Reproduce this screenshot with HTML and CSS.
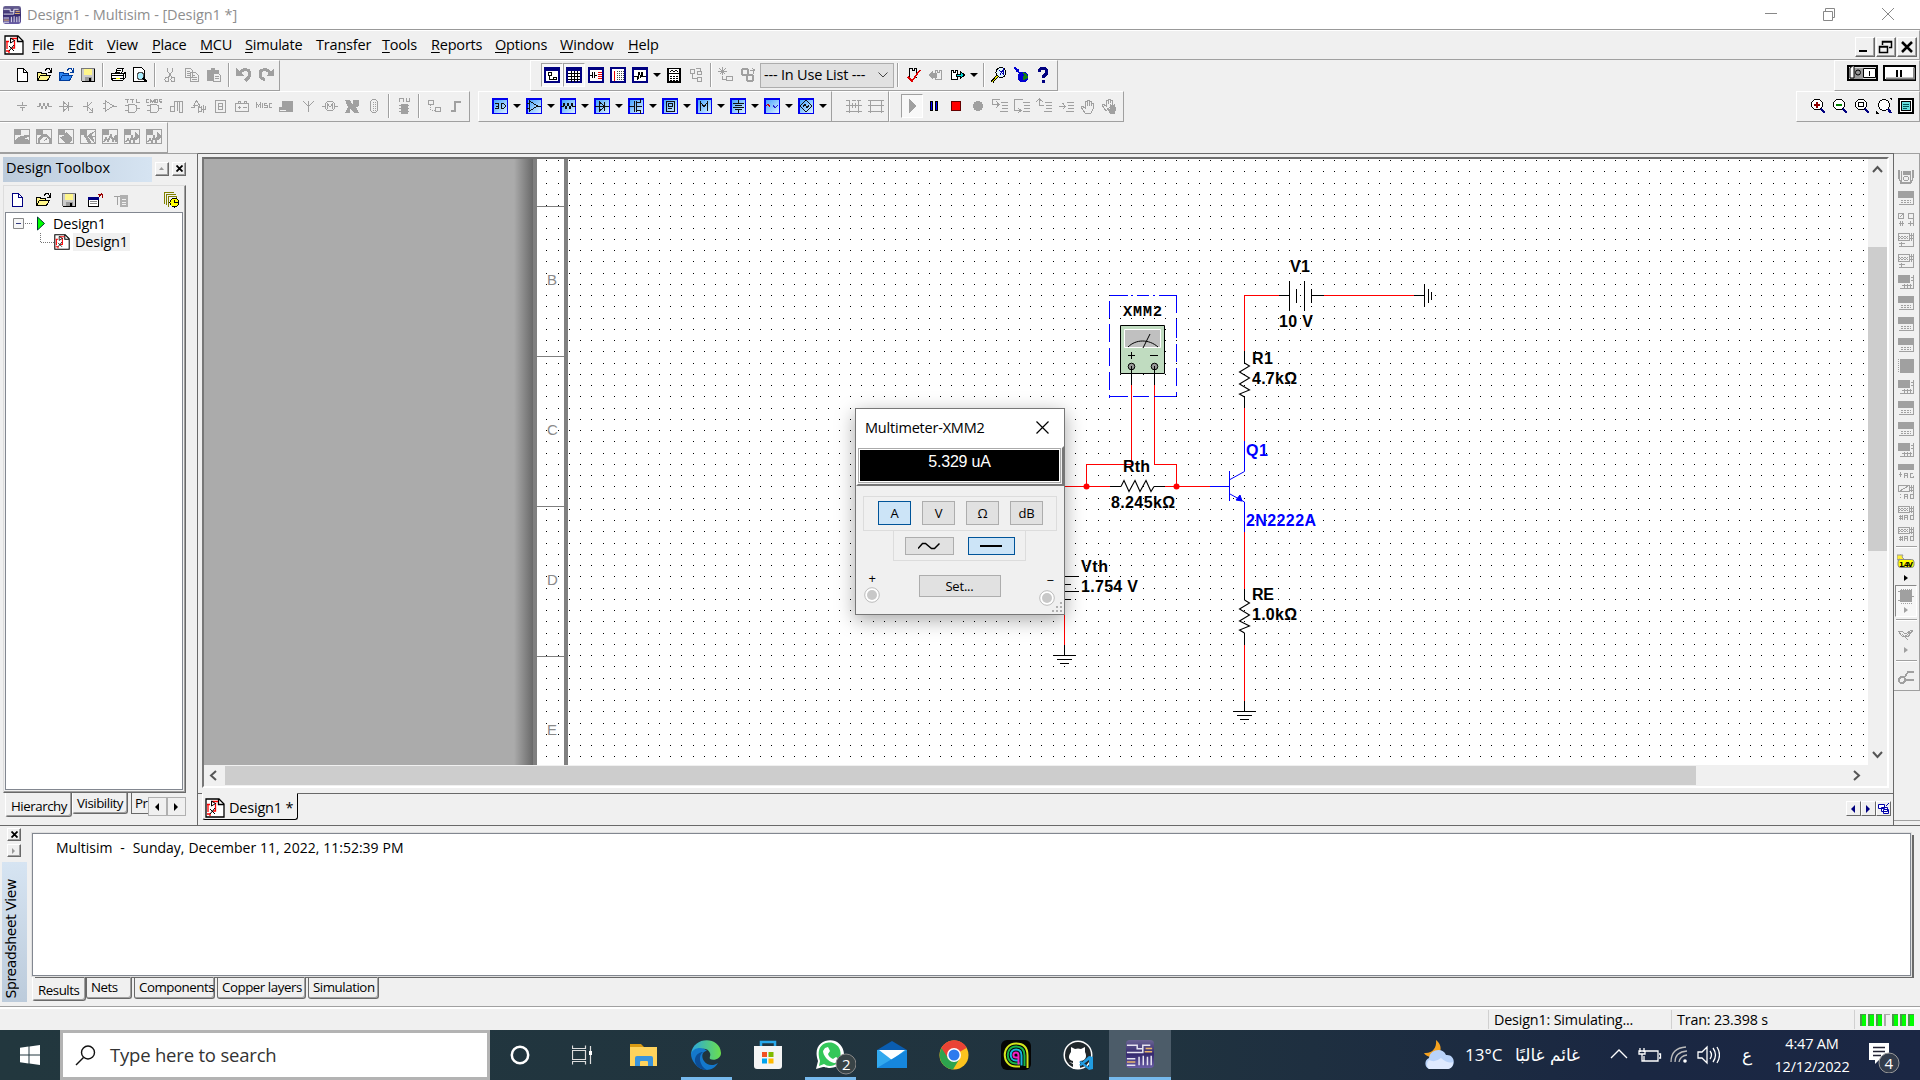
FILE: index.html
```html
<!DOCTYPE html>
<html lang="en">
<head>
<meta charset="utf-8">
<title>Design1 - Multisim</title>
<link rel="stylesheet" href="styles.css">
</head>
<body>
<svg class="sprite" aria-hidden="true">
  <symbol id="doc" viewBox="0 0 16 16"><path d="M3.500 1.500h6l4 4v9h-10z" fill="#fff" stroke="currentColor"/><path d="M9.500 1.500v4h4" fill="none" stroke="currentColor"/></symbol>
  <symbol id="open" viewBox="0 0 16 16"><path d="M1.500 14v-9h3l1 1h5v2" fill="var(--f,#fff68a)" stroke="currentColor"/><path d="M1.500 13.500l3-5h10l-3 5z" fill="var(--f,#fff68a)" stroke="currentColor"/><path d="M9 3.500l2-2h2l2 3M15.500 1v4h-4" fill="none" stroke="currentColor"/></symbol>
  <symbol id="save" viewBox="0 0 16 16"><path d="M1.500 1.500h13v13h-12l-1-1z" fill="#ccc" stroke="#777"/><path d="M2 14.500h12.500V2" fill="none" stroke="#000"/><path d="M4 2h8v6H4z" fill="#fff68a"/><path d="M5 10h7v4H5z" fill="#999"/><path d="M9 11h2v3H9z" fill="#000"/></symbol>
  <symbol id="print" viewBox="0 0 16 16"><path d="M5.500 6l2-5h6l-2 5M1.500 6.500h12l2-1v5l-3 3h-10l-1-2z" fill="#fff" stroke="currentColor"/><path d="M7 3.500h4M6 5.500h4M1 8.500h12M2 11.500h11M13.500 7v6" stroke="currentColor" fill="none"/><path d="M6 11h4v1H6z" fill="#ff0"/></symbol>
  <symbol id="preview" viewBox="0 0 16 16"><path d="M1.500.5h8l3 3v11h-11z" fill="#fff" stroke="currentColor"/><circle cx="8.500" cy="9" r="3.500" fill="#aef" stroke="#555"/><path d="M11 11l4 4" stroke="currentColor" stroke-width="2"/></symbol>
  <symbol id="cut" viewBox="0 0 16 16"><path d="M5.500 1v3l5 7M10.500 1v3L6 11" stroke="currentColor" fill="none"/><circle cx="5" cy="12.500" r="2" fill="none" stroke="currentColor"/><circle cx="11" cy="12.500" r="2" fill="none" stroke="currentColor"/></symbol>
  <symbol id="copy" viewBox="0 0 16 16"><path d="M1.500 1.500h5l2 2v7h-7zM6.500 5.500h5l3 3v6h-8z" fill="#f0f0f0" stroke="currentColor"/><path d="M3 4.500h3M3 6.500h3M3 8.500h3M8 8.500h3M8 10.500h5M8 12.500h5" stroke="currentColor"/></symbol>
  <symbol id="paste" viewBox="0 0 16 16"><path d="M1 3h4V1h4v2h4v11H1z" fill="currentColor"/><path d="M7.500 6.500h5l2 2v6h-7z" fill="#f0f0f0" stroke="currentColor"/><path d="M9 9.500h4M9 11.500h4" stroke="currentColor"/></symbol>
  <symbol id="undo" viewBox="0 0 16 16"><path d="M4 6c3-5 10-4 10 1 0 3-2 4-5 7" fill="none" stroke="currentColor" stroke-width="3"/><path d="M0 1v8h8z" fill="currentColor"/></symbol>
  <symbol id="redo" viewBox="0 0 16 16"><path d="M12 6C9 1 2 2 2 7c0 3 1 4 5 6" fill="none" stroke="currentColor" stroke-width="3"/><path d="M16 1v8H8z" fill="currentColor"/></symbol>
  <symbol id="src" viewBox="0 0 16 16"><path d="M8.500 4v3M3 7.500h10M6 9.500h5M8.500 10v3" stroke="currentColor" fill="none"/></symbol>
  <symbol id="res" viewBox="0 0 16 16"><path d="M1 8.500h2l1-3 2 5 2-5 2 5 2-5 1 3h3" stroke="currentColor" fill="none"/></symbol>
  <symbol id="diode" viewBox="0 0 16 16"><path d="M1 8.500h14M5.500 4v9l5-4.500zM10.500 4v9" stroke="currentColor" fill="none"/></symbol>
  <symbol id="bjt" viewBox="0 0 16 16"><path d="M3 8.500h4M7.500 4v9M8 8l4-4M8 9l5 5M12.500 10v4h-4" stroke="currentColor" fill="none"/></symbol>
  <symbol id="opamp" viewBox="0 0 16 16"><path d="M3.500 3v10l8-5zM1 5.500h2M1 10.500h2M11 8.500h4" stroke="currentColor" fill="none"/></symbol>
  <symbol id="gate" viewBox="0 0 16 16"><path d="M1 1.500h4M3.500 1v4M6 1.500h4M8.500 1v4M12.500 1v3.500h3M1 7.500h4M1 12.500h4M4.500 6.500v8h5c4 0 5-8 0-8zM12 10.500h4" stroke="currentColor" fill="none"/></symbol>
  <symbol id="gate2" viewBox="0 0 16 16"><path d="M3 1.500H.5v3H3M4.500 5V1.500L6.500 4l2-2.500V5M9.500 1.500h2v3h-2zM15.500 1.500h-2v1.500h2v1.500h-2M1 7.500h4M1 12.500h4M4.500 6.500v8h5c4 0 5-8 0-8zM12 10.500h4" stroke="currentColor" fill="none"/></symbol>
  <symbol id="mixed" viewBox="0 0 16 16"><path d="M2.500 8.500h4v5h-4zM6.500 14V3.500h3V13M9 3.500h5.500v11M11.500 3v11h3" stroke="currentColor" fill="none"/></symbol>
  <symbol id="mix2" viewBox="0 0 16 16"><path d="M1 9.500h3V6l2.500-3 3 4v3M3 7.500h5M8.500 9.500h3v4h-3M8.500 8v7M13.500 7v8M11.500 8v3h4V8" stroke="currentColor" fill="none"/></symbol>
  <symbol id="seg" viewBox="0 0 16 16"><path d="M3.500 2.500h10v12h-10zM6.500 5.500h4v6h-4zM6 8.500h5" stroke="currentColor" fill="none"/></symbol>
  <symbol id="batt" viewBox="0 0 16 16"><path d="M1.500 5.500h13v8h-13zM4 5V3h2v2M10 5V3h2v2M4 9.500h3M9 9.500h4M5.500 8v3" stroke="currentColor" fill="none"/></symbol>
  <symbol id="misc" viewBox="0 0 16 16"><path d="M.5 10V5l2 3 2-3v5M6.500 5v5M11 5.500H8.500v2H11v2H8M16 5.500h-3v4h3" stroke="currentColor" fill="none"/></symbol>
  <symbol id="peri" viewBox="0 0 16 16"><path d="M4 3h11v8H4zM1 9h14v5H1z" fill="currentColor"/><path d="M2 12h6v1H2z" fill="#f0f0f0"/></symbol>
  <symbol id="ant" viewBox="0 0 16 16"><path d="M3 3l5.500 5.500L14 3M8.500 3v11" stroke="currentColor" fill="none"/></symbol>
  <symbol id="motor" viewBox="0 0 16 16"><circle cx="8" cy="8" r="5" fill="none" stroke="currentColor"/><path d="M0 8.500h3M13 8.500h3M5.500 11V6L8 9l2.500-3v5" stroke="currentColor" fill="none"/></symbol>
  <symbol id="ni" viewBox="0 0 16 16"><path d="M1 2h5l3 5V2h6v6l-3 1 3 6h-5l-4-5v5H1l3-6z" fill="currentColor"/></symbol>
  <symbol id="conn" viewBox="0 0 16 16"><rect x="4.500" y="1.500" width="7" height="13" rx="3.500" fill="none" stroke="currentColor"/><path d="M7 4v9M9.500 4v9" stroke="currentColor" stroke-dasharray="1 1"/></symbol>
  <symbol id="mcu" viewBox="0 0 16 16"><path d="M3.500 4V.5h4V4M10.500 0v3h3V0M5 6h6v9H5z" stroke="currentColor" fill="none"/><path d="M5 6h6v9H5z" fill="currentColor"/><path d="M3 7.500h10M3 10.500h10M3 13.500h10" stroke="currentColor"/></symbol>
  <symbol id="hier" viewBox="0 0 16 16"><path d="M2.500 2.500h5v4h-5zM9.500 9.500h5v4h-5z" stroke="currentColor" fill="none"/><path d="M4.500 7v5h5" stroke="currentColor" stroke-dasharray="1 1" fill="none"/></symbol>
  <symbol id="bus" viewBox="0 0 16 16"><path d="M3 13h4V4h6" stroke="currentColor" stroke-width="2" fill="none"/></symbol>
  <symbol id="gb" viewBox="0 0 16 16"><path d="M.5.5h15v14H.5z" fill="#f0f0f0" stroke="currentColor"/><path d="M0 0h7v6H0z" fill="currentColor"/></symbol>
  <symbol id="g1" viewBox="0 0 16 16"><use href="#gb"/><path d="M1 11c4-4 8-5 14-5v2l-5 1 5 2v3H1v-2l7-1-7 1z" fill="currentColor"/></symbol>
  <symbol id="g2" viewBox="0 0 16 16"><use href="#gb"/><path d="M2 14V9l4-4h5l4 5v4h-2v-3l-3-3H7l-3 3v3zM7 12l4-4v3z" fill="currentColor"/></symbol>
  <symbol id="g3" viewBox="0 0 16 16"><use href="#gb"/><path d="M8 3l6 5v3l-3 3H7l-3-4-3-2 5-1z" fill="currentColor"/></symbol>
  <symbol id="g4" viewBox="0 0 16 16"><use href="#gb"/><path d="M6 5l5 9H9L4 6zM11 4l-3 3 7 7M15 2l-5 4M15 8l-5-1" fill="currentColor" stroke="currentColor"/></symbol>
  <symbol id="g5" viewBox="0 0 16 16"><use href="#gb"/><path d="M2 13l2-4 2 3 3-6 2 6 3-6v7" fill="none" stroke="currentColor" stroke-width="1.500"/></symbol>
  <symbol id="g6" viewBox="0 0 16 16"><use href="#gb"/><path d="M2 13l2-3 2 3 2-6 2 6 2-7M12 5v5l3-2z" fill="none" stroke="currentColor" stroke-width="1.500"/></symbol>
  <symbol id="w1" viewBox="0 0 16 16"><path d="M1 1h14v14H1z" fill="#fff" stroke="#000080" stroke-width="2"/><path d="M1 2h14" stroke="#000080" stroke-width="3"/><path d="M4.500 5.500h3v3h-3zM9.500 10.500h3v2h-3zM5.500 9v3h4" stroke="#000" fill="none"/></symbol>
  <symbol id="w2" viewBox="0 0 16 16"><path d="M1 1h14v14H1z" fill="#fff" stroke="#000080" stroke-width="2"/><path d="M1 2h14" stroke="#000080" stroke-width="3"/><path d="M5.500 4v11M8.500 4v11M11.500 4v11M2 6.500h12M2 9.500h12M2 12.500h12" stroke="#000"/></symbol>
  <symbol id="w3" viewBox="0 0 16 16"><path d="M1 1h14v14H1z" fill="#fff" stroke="#000080" stroke-width="2"/><path d="M1 2h14" stroke="#000080" stroke-width="2"/><path d="M2 8.500h2M4.500 5v6M6.500 5v6M7 8.500h2" stroke="#000"/><path d="M10 5.500h4M10 7.500h4M10 9.500h4M10 11.500h4" stroke="#e00"/></symbol>
  <symbol id="w4" viewBox="0 0 16 16"><path d="M1 1h14v14H1z" fill="#fff" stroke="#000080" stroke-width="2"/><path d="M4.500 4v10" stroke="#e00"/><path d="M7.500 4v10M9.500 4v10M11.500 4v10M13.500 4v10" stroke="#444" stroke-dasharray="1 1"/></symbol>
  <symbol id="w5" viewBox="0 0 16 16"><path d="M1 1h14v14H1z" fill="#fff" stroke="#000080" stroke-width="2"/><path d="M1 2h14" stroke="#000080" stroke-width="2"/><path d="M2 9.500h3l1 3 1-7 2 5 1-5 1 4h3" stroke="#000" fill="none"/></symbol>
  <symbol id="calc" viewBox="0 0 16 16"><path d="M2 1.500h12v13.500H2z" fill="#fff" stroke="#000" stroke-width="1.500"/><path d="M4 5l2-2 2 2 2-2 2 2M3 6.500h10" stroke="#000" fill="none"/><path d="M4 9h9M4 11h9M4 13h9" stroke="#000" stroke-dasharray="2 1"/></symbol>
  <symbol id="blocks" viewBox="0 0 16 16"><path d="M2.500 2.500h4v4h-4zM9.500 4.500h4v3h-4zM9.500 10.500h4v4h-4zM4.500 7v4h4M8 1.500h4v3" stroke="currentColor" fill="none"/></symbol>
  <symbol id="star" viewBox="0 0 16 16"><path d="M4.500 0v8M0 4.500h9M1.500 1.500l6 6M7.500 1.500l-6 6M8.500 9.500h6v4h-6zM4.500 9v3h4" stroke="currentColor" fill="none"/></symbol>
  <symbol id="gears" viewBox="0 0 16 16"><circle cx="5" cy="5" r="3.500" fill="none" stroke="currentColor" stroke-width="2"/><circle cx="10" cy="11" r="3.500" fill="none" stroke="currentColor" stroke-width="2"/><path d="M10 3.500h3V7M12 1l3 2.500" stroke="currentColor" fill="none"/></symbol>
  <symbol id="check" viewBox="0 0 16 16"><path d="M2.500 10.500h2v-9h3v2h2v-2h2v6M9 10.500h3" stroke="#000" fill="none"/><path d="M3 10l4 4 8-11" stroke="#e00000" fill="none" stroke-width="1.600"/></symbol>
  <symbol id="back" viewBox="0 0 16 16"><path d="M1 8l5-4v8zM6 6h4v5H6z" fill="currentColor"/><path d="M8.500 12V3h2v2h2V3h2v9z" stroke="currentColor" fill="none"/></symbol>
  <symbol id="fwd" viewBox="0 0 16 16"><path d="M2.500 12V3h2v2h2V3h2v9z" stroke="#000" fill="#fff"/><path d="M7 7h4V4l4.500 4-4.500 4V9H7z" fill="#0dd" stroke="#000"/></symbol>
  <symbol id="find" viewBox="0 0 16 16"><circle cx="10" cy="5.500" r="5" fill="#dff4ff" stroke="#000"/><path d="M8 3l4 4v-4l-3 5" fill="none" stroke="#00a"/><path d="M6.500 9L1 15" stroke="#000" stroke-width="3"/><path d="M6.500 9L1 15" stroke="#ee0"/></symbol>
  <symbol id="globe" viewBox="0 0 16 16"><circle cx="10" cy="10" r="5.500" fill="#0000d0"/><path d="M10 5l4 2 1 4-3 1-1 3-1-4 1-3z" fill="#108010"/><path d="M0 1l2-1 3 3V1l2 5-5-1 1-1z" fill="#0000d0"/></symbol>
  <symbol id="help" viewBox="0 0 16 16"><path d="M4 5c0-5 8-5 8 0 0 3-4 3-4 6M8 12.500v3" stroke="#000080" fill="none" stroke-width="3"/></symbol>
  <symbol id="vbase" viewBox="0 0 16 16"><path d="M.5.5h15v15H.5z" fill="url(#bl)" stroke="#00e" stroke-width="2"/></symbol>
  <symbol id="scope" viewBox="0 0 16 16"><path d="M4 3.500h8v10H4zM6 5.500h4v3H6zM6 10.500h4" fill="none" stroke="currentColor"/></symbol>
  <symbol id="mlet" viewBox="0 0 16 16"><path d="M4.500 13V4l3.500 5 3.500-5v9" stroke="currentColor" fill="none"/></symbol>
  <symbol id="d3" viewBox="0 0 16 16"><path d="M3 5.500h3.500v5H3M4 8h3M9.500 5.500v5h2l2-2v-1l-2-2z" stroke="currentColor" fill="none"/></symbol>
  <symbol id="fet" viewBox="0 0 16 16"><path d="M1 8.500h5M6.500 3v11M8.500 3v11M9 4.500h3V1M9 8.500h5M9 12.500h3V16" stroke="currentColor" fill="none"/></symbol>
  <symbol id="cap" viewBox="0 0 16 16"><path d="M8.500 2v3M3 5.500h11M5 7.500h7M3 9.500h11M5 11.500h7M8.500 12v3" stroke="currentColor" fill="none"/></symbol>
  <symbol id="probeS" viewBox="0 0 16 16"><path d="M2 8l2-2 2 3" stroke="#c00" fill="none"/><path d="M9 7l2 3 3-3" stroke="#22c" fill="none"/></symbol>
  <symbol id="ac" viewBox="0 0 16 16"><path d="M8 2l6 6-6 6-6-6zM5 9l2-3 2 4 2-3" stroke="currentColor" fill="none"/></symbol>
  <symbol id="lad1" viewBox="0 0 16 16"><path d="M3.500 3v12M12.500 3v12M0 2.500h4M6 2.500h4M11 2.500h4M0 7.500h16M0 13.500h16M6.500 5v5M9.500 5v5" stroke="currentColor" fill="none"/></symbol>
  <symbol id="lad2" viewBox="0 0 16 16"><path d="M2.500 2v13M13.500 2v13M0 2.500h16M0 7.500h16M0 13.500h16" stroke="currentColor" fill="none"/></symbol>
  <symbol id="play" viewBox="0 0 16 16"><path d="M5 1l7 7-7 7z" fill="currentColor"/></symbol>
  <symbol id="pause" viewBox="0 0 16 16"><path d="M4.500 3.500h2v9h-2zM9.500 3.500h2v9h-2z" fill="#00f" stroke="#000"/></symbol>
  <symbol id="stop" viewBox="0 0 16 16"><path d="M3.500 3.500h9v9h-9z" fill="#f00" stroke="#600"/></symbol>
  <symbol id="rec" viewBox="0 0 16 16"><circle cx="8" cy="8" r="5" fill="currentColor"/></symbol>
  <symbol id="st1" viewBox="0 0 16 16"><path d="M8 1.500H.5v5H7M4 3l3 3.500L4 10M9 4.500h7M10 7.500h6M10 10.500h6M8 13.500h8" stroke="currentColor" fill="none"/></symbol>
  <symbol id="st2" viewBox="0 0 16 16"><path d="M9 1.500H.5v11H6M4 10l3 2.500L4 15M9 4.500h7M10 7.500h6M10 10.500h6M9 13.500h7" stroke="currentColor" fill="none"/></symbol>
  <symbol id="st3" viewBox="0 0 16 16"><path d="M3.500 1v6.500H8M0 4l3.500-3L7 4M9 4.500h7M10 7.500h6M10 10.500h6M8 13.500h8" stroke="currentColor" fill="none"/></symbol>
  <symbol id="st4" viewBox="0 0 16 16"><path d="M1 8.500h6M4.500 5l3 3.500-3 3M9 4.500h7M10 7.500h6M10 10.500h6M8 13.500h8" stroke="currentColor" fill="none"/></symbol>
  <symbol id="hand" viewBox="0 0 16 16"><path d="M5 15L1 9l1-1 3 2V3h2v5V2h2v6V3h2v5V5h2v6l-2 4z" stroke="currentColor" fill="none"/></symbol>
  <symbol id="hand2" viewBox="0 0 16 16"><path d="M4 13L0 7l1-1 3 2V2h2v4V1h2v4V2h2v5z" stroke="currentColor" fill="none"/><path d="M8 16L5 10l3 1V6h1l1 3V5h1l1 4V6h1l1 5-1 5z" fill="currentColor"/></symbol>
  <symbol id="zin" viewBox="0 0 16 16"><circle cx="7" cy="6.500" r="5.500" fill="#fff" stroke="#000"/><path d="M11 11l4 4" stroke="#000080" stroke-width="2.500"/><path d="M4 6.500h6M7 3.500v6" stroke="#900000" stroke-width="2"/></symbol>
  <symbol id="zout" viewBox="0 0 16 16"><circle cx="7" cy="6.500" r="5.500" fill="#fff" stroke="#000"/><path d="M11 11l4 4" stroke="#000080" stroke-width="2.500"/><path d="M4 6.500h6" stroke="#008000" stroke-width="2"/></symbol>
  <symbol id="zarea" viewBox="0 0 16 16"><circle cx="7" cy="6.500" r="5.500" fill="#fff" stroke="#000"/><path d="M11 11l4 4" stroke="#000080" stroke-width="2.500"/><path d="M4.500 4.500h5v4h-5z" stroke="#000" fill="none"/></symbol>
  <symbol id="zfit" viewBox="0 0 16 16"><circle cx="8" cy="7" r="5.500" fill="#fff" stroke="#000"/><path d="M12 11l3 4" stroke="#000080" stroke-width="2.500"/><path d="M13 0h3v3zM0 13v3h3z"/></symbol>
  <symbol id="full" viewBox="0 0 16 16"><path d="M1 1h14v14H1z" fill="#fff" stroke="#000" stroke-width="1.500"/><path d="M3.500 3.500h9v9h-9z" fill="#6dd" stroke="#000"/><path d="M5 6.500h6M5 8.500h6M5 10.500h4" stroke="#055"/></symbol>
  <symbol id="sheet" viewBox="0 0 20 20"><path d="M1 1h13l5 5v13H1z" fill="#fff" stroke="#000" stroke-width="1.300"/><path d="M13.500 1v5.500H19" fill="none" stroke="#000" stroke-width="1.300"/><path d="M2 6.500h3M3 7v7M7 3.500h6M10.500 5v8H8M2 16h3v2" fill="none" stroke="#f00" stroke-width="1.300"/><path d="M6.500 3v5l4-2.500zM5 16l5-6M5 11l5 5" fill="none" stroke="#000"/></symbol>
  <symbol id="chip" viewBox="0 0 30 30"><rect width="30" height="30" rx="4" fill="url(#pu)"/><path d="M1 5.500h11v4h6v-4h8M1 13.500h17v-6M1 20h9M1 27h9M14 27v-9M18.500 27V17M23 27v-9M27 27V17" stroke="#e6e4f0" stroke-width="1.600" fill="none"/><path d="M20 12.500h8M21 9h7M1 23.500h9" stroke="#e9b56b" stroke-width="1.600"/></symbol>
  <symbol id="ins" viewBox="0 0 16 16"><path d="M0 1h16v7H0z" fill="currentColor"/><path d="M15.500 8v6.500H1" stroke="currentColor" fill="none"/><path d="M3 10.500h10M3 12.500h10" stroke="currentColor" stroke-dasharray="2 1"/></symbol>
  <symbol id="ins2" viewBox="0 0 16 16"><path d="M.5 2.500h5v5h-5zM10.500 2.500h5v5h-5zM1 12.500h5M10 12.500h6M2.500 10v5M4.500 10v5M12.500 10v5M15 8v7M2 6l3-3" stroke="currentColor" fill="none"/></symbol>
  <symbol id="ins3" viewBox="0 0 16 16"><path d="M.5 1.500h11v7H.5zM13.500 1v8M15.500 1v14M12 3.500h4M12 6.500h4M1 11.500h6M1 14.500h15M3.500 10v5" stroke="currentColor" fill="none"/><path d="M1 4l3 3 3-3 3 3M1 7l3-3 3 3 3-3" stroke="currentColor" fill="none"/></symbol>
  <symbol id="ins4" viewBox="0 0 16 16"><path d="M0 1h12v8H0z" fill="currentColor"/><path d="M15.500 1v13.500H2M13 3.500h3M13 6.500h3M4 11.500h10M6.500 10v4M9.500 10v4M12.500 10v4" stroke="currentColor" fill="none"/></symbol>
  <symbol id="insAG" viewBox="0 0 16 16"><path d="M0 1h16v6H0z" fill="currentColor"/><path d="M1 11.500h3M2.500 9v5M6.500 15v-5h3v5M6 12.500h4M15 10.500h-3v4h3v-2" stroke="currentColor" fill="none"/></symbol>
  <symbol id="insAG2" viewBox="0 0 16 16"><path d="M.5 1.500h11v6H.5zM2 7l8-5M13.500 1v7M15.500 1v14M12 3.500h4M12 6.500h4M2.500 10v1M2.500 13v1M6.500 15v-5h3v5M6 12.500h4M15 10.500h-3v4h3v-2" stroke="currentColor" fill="none"/></symbol>
  <symbol id="insTK" viewBox="0 0 16 16"><path d="M.5 1.500h11v6H.5zM13.500 1v7M15.500 1v14M12 3.500h4M12 6.500h4M1 11.500h4M1 13.500h4M2.500 10v5M4 10v5M6.500 15v-5h3v5M6 12.500h4M15 10.500h-3v4h3v-2M1 3l3 3 3-3 3 3M1 6l3-3 3 3 3-3" stroke="currentColor" fill="none"/></symbol>
  <symbol id="insM" viewBox="0 0 16 16"><path d="M1 1v8l2 5h10l2-5V1M3.500 2v11M12.500 2v11" fill="none" stroke="currentColor" stroke-width="1.300"/><path d="M5 2h7v4H5z" fill="currentColor"/><circle cx="8" cy="9.500" r="2.500" fill="none" stroke="currentColor"/></symbol>
  <linearGradient id="bl" x1="0" y1="0" x2="1" y2="1"><stop offset="0" stop-color="#39f"/><stop offset="1" stop-color="#e2f4ff"/></linearGradient>
  <linearGradient id="pu" x1="0" y1="0" x2="0" y2="1"><stop offset="0" stop-color="#6b6494"/><stop offset=".5" stop-color="#34286e"/><stop offset="1" stop-color="#6a5ea6"/></linearGradient>
</svg>

<div class="app">
  <header class="titlebar">
    <svg class="logo"><use href="#chip"/></svg><span class="title">Design1 - Multisim - [Design1 *]</span>
    <svg class="wincontrols" width="130" height="16" viewBox="0 0 130 16"><path d="M0 6.500h12M58.500 4.500h9v9h-9zM60.500 4V1.500h9v9h-2M117 1l12 12M129 1l-12 12" fill="none" stroke="#888"/></svg>
  </header>
  <nav class="menubar">
    <svg class="sheeticon"><use href="#sheet"/></svg>
    <div class="menus"><span><u>F</u>ile</span><span><u>E</u>dit</span><span><u>V</u>iew</span><span><u>P</u>lace</span><span><u>M</u>CU</span><span><u>S</u>imulate</span><span>Tra<u>n</u>sfer</span><span><u>T</u>ools</span><span><u>R</u>eports</span><span><u>O</u>ptions</span><span><u>W</u>indow</span><span><u>H</u>elp</span></div>
    <div class="mdibtns"><b><svg viewBox="0 0 16 16"><path d="M2 12h8" stroke="#000" stroke-width="2"/></svg></b><b><svg viewBox="0 0 16 16"><path d="M4.500 6V2.500h9v6H11M4 3h10M1.500 7.500h8v6h-8zM1 8h9" fill="none" stroke="#000" stroke-width="1.500"/></svg></b><b><svg viewBox="0 0 16 16"><path d="M3 3l10 10M13 3L3 13" stroke="#000" stroke-width="2.500"/></svg></b></div>
  </nav>

  <div class="row">
    <div class="bar b1">
      <i class="t k"><svg><use href="#doc"/></svg></i><i class="t k"><svg><use href="#open"/></svg></i><i class="t k blue"><svg><use href="#open"/></svg></i><i class="t k"><svg><use href="#save"/></svg></i><s></s>
      <i class="t k"><svg><use href="#print"/></svg></i><i class="t k"><svg><use href="#preview"/></svg></i><s></s>
      <i class="t"><svg><use href="#cut"/></svg></i><i class="t"><svg><use href="#copy"/></svg></i><i class="t"><svg><use href="#paste"/></svg></i><s></s>
      <i class="t"><svg><use href="#undo"/></svg></i><i class="t"><svg><use href="#redo"/></svg></i>
    </div>
    <div class="bar b2">
      <i class="t on"><svg><use href="#w1"/></svg></i><i class="t on"><svg><use href="#w2"/></svg></i><i class="t"><svg><use href="#w3"/></svg></i><i class="t"><svg><use href="#w4"/></svg></i><i class="t"><svg><use href="#w5"/></svg></i><em></em>
      <i class="t"><svg><use href="#calc"/></svg></i><i class="t"><svg><use href="#blocks"/></svg></i><s></s>
      <i class="t"><svg><use href="#star"/></svg></i><i class="t"><svg><use href="#gears"/></svg></i>
      <div class="combo"><span>--- In Use List ---</span><svg width="10" height="6" viewBox="0 0 10 6"><path d="M.5.5L5 5 9.500.5" fill="none" stroke="#444"/></svg></div><s></s>
      <i class="t"><svg><use href="#check"/></svg></i><i class="t"><svg><use href="#back"/></svg></i><i class="t"><svg><use href="#fwd"/></svg></i><em></em><s></s>
      <i class="t"><svg><use href="#find"/></svg></i><i class="t"><svg><use href="#globe"/></svg></i><i class="t"><svg><use href="#help"/></svg></i>
    </div>
    <div class="bar b3">
      <svg width="69" height="17" viewBox="0 0 69 17"><path d="M1 1h29v14H1z" fill="#ddd" stroke="#000" stroke-width="2"/><path d="M3 3h13v11H3z" fill="#999"/><path d="M3 3l4-3v13H3z" fill="#fff" stroke="#000"/><circle cx="11" cy="7.500" r="2.500" fill="none" stroke="#000"/><path d="M16.500 3.500h12v9h-12z" fill="#fff" stroke="#000"/><path d="M22.500 6v5" stroke="#000"/><path d="M37 1h31v14H37z" fill="#fff" stroke="#000" stroke-width="2"/><path d="M39 13.500h28v-11" fill="none" stroke="#888" stroke-width="2"/><path d="M50 5v7M54 5v7" stroke="#000" stroke-width="2"/></svg>
    </div>
  </div>
  <div class="row">
    <div class="bar c1">
      <i class="t"><svg><use href="#src"/></svg></i><i class="t"><svg><use href="#res"/></svg></i><i class="t"><svg><use href="#diode"/></svg></i><i class="t"><svg><use href="#bjt"/></svg></i><i class="t"><svg><use href="#opamp"/></svg></i><i class="t"><svg><use href="#gate"/></svg></i><i class="t"><svg><use href="#gate2"/></svg></i><i class="t"><svg><use href="#mixed"/></svg></i><i class="t"><svg><use href="#mix2"/></svg></i><i class="t"><svg><use href="#seg"/></svg></i><i class="t"><svg><use href="#batt"/></svg></i><i class="t"><svg><use href="#misc"/></svg></i><i class="t"><svg><use href="#peri"/></svg></i><i class="t"><svg><use href="#ant"/></svg></i><i class="t"><svg><use href="#motor"/></svg></i><i class="t"><svg><use href="#ni"/></svg></i><i class="t"><svg><use href="#conn"/></svg></i><s></s>
      <i class="t"><svg><use href="#mcu"/></svg></i><s></s><i class="t"><svg><use href="#hier"/></svg></i><i class="t"><svg><use href="#bus"/></svg></i>
    </div>
    <div class="bar c2">
      <i class="t v"><svg><use href="#vbase"/><use href="#d3"/></svg></i><em></em><i class="t v"><svg><use href="#vbase"/><use href="#opamp"/></svg></i><em></em><i class="t v"><svg><use href="#vbase"/><use href="#res"/></svg></i><em></em><i class="t v"><svg><use href="#vbase"/><use href="#diode"/></svg></i><em></em><i class="t v"><svg><use href="#vbase"/><use href="#fet"/></svg></i><em></em><i class="t v"><svg><use href="#vbase"/><use href="#scope"/></svg></i><em></em><i class="t v"><svg><use href="#vbase"/><use href="#mlet"/></svg></i><em></em><i class="t v"><svg><use href="#vbase"/><use href="#cap"/></svg></i><em></em><i class="t v"><svg><use href="#vbase"/><use href="#probeS"/></svg></i><em></em><i class="t v"><svg><use href="#vbase"/><use href="#ac"/></svg></i><em></em>
    </div>
    <div class="bar c3"><i class="t"><svg><use href="#lad1"/></svg></i><i class="t"><svg><use href="#lad2"/></svg></i></div>
    <div class="bar c4">
      <i class="t on"><svg><use href="#play"/></svg></i><i class="t"><svg><use href="#pause"/></svg></i><i class="t"><svg><use href="#stop"/></svg></i><i class="t"><svg><use href="#rec"/></svg></i><i class="t"><svg><use href="#st1"/></svg></i><i class="t"><svg><use href="#st2"/></svg></i><i class="t"><svg><use href="#st3"/></svg></i><i class="t"><svg><use href="#st4"/></svg></i><i class="t"><svg><use href="#hand"/></svg></i><i class="t"><svg><use href="#hand2"/></svg></i>
    </div>
    <div class="bar c5"><i class="t"><svg><use href="#zin"/></svg></i><i class="t"><svg><use href="#zout"/></svg></i><i class="t"><svg><use href="#zarea"/></svg></i><i class="t"><svg><use href="#zfit"/></svg></i><i class="t"><svg><use href="#full"/></svg></i></div>
  </div>
  <div class="row">
    <div class="bar d1"><i class="t"><svg><use href="#g1"/></svg></i><i class="t"><svg><use href="#g2"/></svg></i><i class="t"><svg><use href="#g3"/></svg></i><i class="t"><svg><use href="#g4"/></svg></i><i class="t"><svg><use href="#g5"/></svg></i><i class="t"><svg><use href="#g6"/></svg></i><i class="t"><svg><use href="#g6"/></svg></i></div>
  </div>

  <main class="main">
    <aside class="toolbox">
      <div class="tbhead"><h2>Design Toolbox</h2><b class="mini"><svg width="6" height="4"><path d="M0 3l2.500-3L5 3z" fill="#999"/></svg></b><b class="mini"><svg width="7" height="7" viewBox="0 0 7 7"><path d="M.5.500l6 6M6.500.5l-6 6" stroke="#000" stroke-width="1.800"/></svg></b></div>
      <div class="tbbody">
        <div class="tbicons">
          <i class="k navy"><svg><use href="#doc"/></svg></i><i class="k"><svg><use href="#open"/></svg></i><i class="k"><svg><use href="#save"/></svg></i>
          <i><svg viewBox="0 0 16 16"><path d="M1.500 5.500h10v9h-10z" fill="#fff" stroke="#000"/><path d="M1 6h11" stroke="#000080" stroke-width="3"/><path d="M3 9.500h7M3 11.500h7" stroke="#888"/><path d="M11 2h4v4M15 1l-3 4" stroke="#900" fill="none"/></svg></i>
          <i class="dis"><svg viewBox="0 0 16 16"><path d="M1 4.500h6M4 5v8" stroke="#a0a0a0"/><path d="M7 3h8v12H7z" fill="#b0b0b0"/><path d="M9 7.500h4M9 10h4M9 12.500h4" stroke="#f0f0f0"/></svg></i>
          <i class="last"><svg viewBox="0 0 16 16"><path d="M.5 12V.5h9M2.500 13V2.500h9M4.500 14.500v-10h8v3" fill="none" stroke="#808000"/><circle cx="10.500" cy="10.500" r="4.500" fill="#ff0" stroke="#000"/><path d="M10.500 7.500v3h3" stroke="#000" fill="none"/></svg></i>
        </div>
        <div class="tree">
          <div class="node"><svg width="36" height="18" viewBox="0 0 36 18"><path d="M.5 3.500h10v10H.5z" fill="#f6f6f6" stroke="#888"/><path d="M3 8.500h5" stroke="#333a80"/><path d="M12 8.500h7" stroke="#777" stroke-dasharray="1 1"/><path d="M24.500 2v13l7-6.500z" fill="#0f0" stroke="#033"/></svg><span>Design1</span></div>
          <div class="node sub"><svg width="14" height="18"><path d="M.5 0v9.500H14" fill="none" stroke="#777" stroke-dasharray="1 1"/></svg><svg class="sh"><use href="#sheet"/></svg><span class="sel">Design1</span></div>
        </div>
      </div>
      <div class="tabs ltabs"><span class="cur">Hierarchy</span><span>Visibility</span><span class="cutoff">Pr</span><b><svg width="5" height="8"><path d="M4 0v8L0 4z"/></svg></b><b><svg width="5" height="8"><path d="M0 0v8l4-4z"/></svg></b></div>
    </aside>

    <section class="center">
      <div class="frame">
        <div class="vp">
          <svg class="schematic" width="1664" height="606" viewBox="204 159 1664 606">
            <defs>
              <pattern id="dots" x="546" y="171" width="45" height="45" patternUnits="userSpaceOnUse"><path d="M0 0h1v1H0zM12 0h1v1h-1zM23 0h1v1h-1zM34 0h1v1h-1zM0 12h1v1H0zM12 12h1v1h-1zM23 12h1v1h-1zM34 12h1v1h-1zM0 23h1v1H0zM12 23h1v1h-1zM23 23h1v1h-1zM34 23h1v1h-1zM0 34h1v1H0zM12 34h1v1h-1zM23 34h1v1h-1zM34 34h1v1h-1z"/></pattern>
              <linearGradient id="edge"><stop offset="0" stop-color="#ababab"/><stop offset="1" stop-color="#696969"/></linearGradient>
            </defs>
            <g shape-rendering="crispEdges">
              <path d="M204 159h334v606H204z" fill="#ababab"/><path d="M514 159h19v606h-19z" fill="url(#edge)"/><path d="M533 159h4v606h-4z" fill="#808080"/>
              <path d="M537 159h1331v606H537z" fill="#fff"/><path d="M546 159h1322v606H546z" fill="url(#dots)"/>
              <path d="M564 159h4v606h-4z" fill="#808080"/><path d="M537 206.500h27M537 356.500h27M537 506.500h27M537 656.500h27" stroke="#808080"/>
            </g>
            <g class="zone"><text x="547" y="285">B</text><text x="547" y="435">C</text><text x="547" y="585">D</text><text x="547" y="735">E</text></g>
            <g fill="none" stroke="#f00" shape-rendering="crispEdges">
              <path d="M1279 295.500h-34.500V351M1324 295.500h90M1244.500 408v33M1244.500 532v57M1244.500 645v56M1064.500 486v160M1064 486.500h46M1165 486.500h45M1131.500 385v79.500h-45v22M1154.500 385v79.500h22v22"/>
            </g>
            <g fill="none" stroke="#000" shape-rendering="crispEdges">
              <path d="M1279 295.500h10M1289.500 281v30M1296.500 289v14M1304.500 281v30M1311.500 289v14M1311 295.500h13M1414 295.500h10M1424.500 284v23M1428.500 289v14M1431.500 292v8"/>
              <path d="M1244.500 351v12M1244.500 397v11M1244.500 589v11M1244.500 633v12M1244.500 701v10M1233 711.500h23M1237 715.500h15M1240 719.500h9"/>
              <path d="M1110 486.500h11M1154 486.500h11M1064.500 645v10M1053 655.500h23M1057 659.500h15M1060 663.500h9M1064 576.500h15M1064 584.500h7M1064 591.500h15M1064 599.500h7M1064.500 565v11"/>
            </g>
            <g fill="none" stroke="#000" stroke-width="1.100">
              <path d="M1244.500 363l5 3-10 6 10 6-10 6 10 6-10 4 5 3M1244.500 600l5 3-10 6 10 6-10 6 10 5-10 4 5 3M1121 486.500l3-6 5 11 6-11 5 11 6-11 5 11 3-5"/>
            </g>
            <g stroke="#00f" fill="none"><path d="M1244.500 441v30.500l-14.500 8M1229.500 471v30M1210 486.500h19M1230 494l14.500 8v30"/><path d="M1242 501l-6-1 4-5z" fill="#00f"/><path d="M1110 295.500h18m3 0h2m4 0h12m4 0h2m4 0h17M1110 396.500h18m5 0h16m5 0h22M1109.500 301v17m0 6v18m0 6v18m0 6v18m0 5v3M1176.500 295v18m0 6v19m0 6v18m0 6v18m0 6v4" shape-rendering="crispEdges"/></g>
            <circle cx="1086.500" cy="486.500" r="3" fill="#f00"/><circle cx="1176.500" cy="486.500" r="3" fill="#f00"/>
            <path d="M1120.500 325.500h44v48h-44z" fill="#c0dcc0" stroke="#000"/><path d="M1124.500 329.500h36v18h-36z" fill="#c0c0c0" stroke="#fff"/>
            <path d="M1128 347c8-8 21-8 30 0M1143 348l7-14M1128 355.500h7M1131.500 352v7M1150 355.500h8" fill="none" stroke="#000"/>
            <circle cx="1131.500" cy="366.500" r="3.300" fill="#999" stroke="#000"/><circle cx="1154.500" cy="366.500" r="3.300" fill="#999" stroke="#000"/><path d="M1131.500 366v19M1154.500 366v19" stroke="#000"/>
            <g class="lbl"><text x="1290" y="272" textLength="20">V1</text><text x="1279" y="327" textLength="34">10 V</text><text x="1252" y="364" textLength="21">R1</text><text x="1252" y="384" textLength="45">4.7kΩ</text><text x="1123" y="472" textLength="27">Rth</text><text x="1111" y="508" textLength="64">8.245kΩ</text><text x="1081" y="572" textLength="27">Vth</text><text x="1081" y="592" textLength="57">1.754 V</text><text x="1252" y="600" textLength="22">RE</text><text x="1252" y="620" textLength="45">1.0kΩ</text></g>
            <g class="lbl bluetext"><text x="1246" y="456" textLength="22">Q1</text><text x="1246" y="526" textLength="70">2N2222A</text></g>
            <text class="mono" x="1123" y="316" textLength="39">XMM2</text>
          </svg>
          <div class="vscroll"><svg width="19" height="21"><path d="M5 13l4.500-5 4.500 5" fill="none" stroke="#555" stroke-width="2"/></svg><div class="thumb"></div><svg width="19" height="21"><path d="M5 8l4.500 5L14 8" fill="none" stroke="#555" stroke-width="2"/></svg></div>
        </div>
        <div class="hscroll"><svg width="21" height="19"><path d="M12 5L7 9.500 12 14" fill="none" stroke="#555" stroke-width="2"/></svg><div class="thumb"></div><svg width="21" height="19"><path d="M8 5l5 4.500L8 14" fill="none" stroke="#555" stroke-width="2"/></svg></div>
      </div>
      <div class="doctabs">
        <div class="doctab"><svg class="sheeticon"><use href="#sheet"/></svg><span>Design1 *</span></div>
        <div class="docnav"><b><svg width="5" height="8"><path d="M4 0v8L0 4z" fill="#000080"/></svg></b><b><svg width="5" height="8"><path d="M0 0v8l4-4z" fill="#000080"/></svg></b><b><svg width="12" height="12"><path d="M.5 1.500h6v4h-6zM3.500 4.500h6v4h-6zM5.500 6.500h5v4h-5zM8 3l3-3" fill="#fff" stroke="#00a"/></svg></b></div>
      </div>
    </section>

    <aside class="instruments">
      <div class="ibar">
      <i><svg><use href="#insM"/></svg></i><i><svg><use href="#ins"/></svg></i><i><svg><use href="#ins2"/></svg></i><i><svg><use href="#ins3"/></svg></i><i><svg><use href="#ins3"/></svg></i><i><svg><use href="#ins4"/></svg></i><i><svg><use href="#ins"/></svg></i><i><svg><use href="#ins"/></svg></i><i><svg><use href="#ins"/></svg></i><i><svg viewBox="0 0 16 16"><path d="M2 1h14v14H2z" fill="currentColor"/><path d="M.5 1v14" stroke="currentColor" stroke-dasharray="1 1"/></svg></i><i><svg><use href="#ins4"/></svg></i><i><svg><use href="#ins"/></svg></i><i><svg><use href="#ins"/></svg></i><i><svg><use href="#ins4"/></svg></i><i><svg><use href="#insAG"/></svg></i><i><svg><use href="#insAG2"/></svg></i><i><svg><use href="#insTK"/></svg></i><i><svg><use href="#insTK"/></svg></i>
      <hr>
      <div class="probe"><svg width="18" height="14" viewBox="0 0 18 14"><path d="M0 1h6l-1 2 3 3-2 2-3-3-3 1z" fill="#ffef30" stroke="#999"/><rect x="1" y="5.500" width="16" height="8" rx="2.500" fill="#ff0" stroke="#888"/><text x="2" y="12.500" textLength="14">1.4V</text></svg></div>
      <em class="r dark"></em>
      <div class="sunk"><svg viewBox="0 0 16 16"><path d="M2 2h12v12H2z" fill="currentColor"/><path d="M3 1h12M3 15h12" stroke="currentColor" stroke-dasharray="1 1"/><path d="M0 3.500h2M0 12.500h2M14 8.500h2" stroke="currentColor"/></svg><em class="r"></em></div>
      <hr>
      <i><svg viewBox="0 0 16 16"><path d="M0 5h3l5 3 5-4h2l-5 7-6-1zM4 8l6 6M6 11l7-5" stroke="currentColor" fill="none"/></svg></i><em class="r"></em>
      <hr class="h2">
      <i><svg viewBox="0 0 16 16"><circle cx="4" cy="11" r="3" fill="none" stroke="currentColor" stroke-width="2"/><path d="M6 9l4-6h6M8 11h8" stroke="currentColor" fill="none" stroke-width="1.500"/></svg></i>
      </div>
    </aside>
  </main>

  <section class="spread">
    <div class="spside"><b class="mini"><svg width="7" height="7" viewBox="0 0 7 7"><path d="M.5.500l6 6M6.500.5l-6 6" stroke="#000" stroke-width="1.800"/></svg></b><b class="mini"><svg width="4" height="6"><path d="M0 0l3 3-3 3z" fill="#999"/></svg></b><div class="vtitle"><span>Spreadsheet View</span></div></div>
    <div class="spmain">
      <div class="results"><pre>Multisim  -  Sunday, December 11, 2022, 11:52:39 PM</pre></div>
      <div class="tabs btabs"><span class="cur">Results</span><span>Nets</span><span>Components</span><span>Copper layers</span><span>Simulation</span></div>
    </div>
  </section>
  <footer class="status"><span></span><span>Design1: Simulating...</span><span>Tran: 23.398 s</span><div class="leds"><i></i><i></i><i></i><i class="off"></i><i></i><i></i><i></i></div></footer>

  <div class="taskbar">
    <div class="start"><svg width="21" height="20" viewBox="0 0 21 20"><path d="M0 2.800l8.500-1.200v8H0zM9.500 1.500L20 0v9.600H9.500zM0 10.500h8.500v8L0 17.300zM9.500 10.500H20V20L9.500 18.500z" fill="#fff"/></svg></div>
    <div class="search"><svg width="21" height="21" viewBox="0 0 21 21"><circle cx="13" cy="7.500" r="6.500" fill="none" stroke="#111" stroke-width="1.400"/><path d="M8.500 12.500L1 20" stroke="#111" stroke-width="1.400"/></svg><span>Type here to search</span></div>
    <div class="apps">
      <i><svg width="20" height="20"><circle cx="10" cy="10" r="8.200" fill="none" stroke="#fff" stroke-width="2.500"/></svg></i>
      <i><svg width="20" height="20"><path d="M.5.500v3h13v-3M.5 19.500v-3h13v3M.5 5.500h13v9H.5zM18.500 1v18" fill="none" stroke="#ddd" stroke-width="1.200"/><path d="M17 6h3v4h-3z" fill="#fff"/></svg></i>
      <i><svg width="28" height="24"><path d="M0 1h11l3 3H0z" fill="#d99a13"/><path d="M0 4h27v19H0z" fill="#ffd35c"/><path d="M5 23v-8q0-2 2-2h14q2 0 2 2v8h-5v-4q0-1-1-1h-6q-1 0-1 1v4z" fill="#3a94dc"/></svg></i>
      <i class="run"><svg width="30" height="30" viewBox="0 0 30 30"><defs><linearGradient id="e1"><stop stop-color="#2aa5e0"/><stop offset="1" stop-color="#6be04c"/></linearGradient></defs><path d="M0 14C2-4 29-4 30 13c0 6-7 8-11 6-1-2 1-3 0-6-2-5-9-6-14 0z" fill="url(#e1)"/><path d="M0 14c2-7 12-8 16-3-5 0-6 6-3 10 3 5 10 5 14 2-5 9-17 9-23 1-3-4-4-7-4-10z" fill="#1478cc"/><path d="M12 12c-5 3-4 14 4 18-8 0-13-6-12-11 1-5 5-7 8-7z" fill="#0c4d96"/></svg></i>
      <i><svg width="30" height="30"><path d="M8 7V2h14v5" fill="none" stroke="#28a8ea" stroke-width="2.500"/><path d="M1 6h28v20q0 3-3 3H4q-3 0-3-3z" fill="#f4f4f4"/><path d="M9 12h5v5H9z" fill="#f25022"/><path d="M15.500 12h5v5h-5z" fill="#7fba00"/><path d="M9 18.500h5v5H9z" fill="#00a4ef"/><path d="M15.500 18.500h5v5h-5z" fill="#ffb900"/></svg></i>
      <i class="run"><svg class="wa" width="42" height="36" viewBox="0 0 42 36"><path d="M2 30l2-8C-2 5 12-1 21 2c14 6 11 27-5 27-4 0-5-1-7-1z" fill="#fff"/><path d="M5 27l1-5C1 6 12 2 19 4c12 4 9 23-3 23-3 0-4-1-6-2z" fill="#34c759"/><path d="M11 9l3-1 2 4-2 3c1 3 3 4 5 5l3-2 3 2c0 3-3 4-5 4-6-1-11-8-11-12z" fill="#fff"/><circle cx="32" cy="25" r="10" fill="#394447" stroke="#888"/><text class="badge" x="28" y="31">2</text></svg></i>
      <i><svg width="30" height="28"><path d="M0 9l15-9 15 9z" fill="#0a5db0"/><path d="M0 9h30v18H0z" fill="#32a9ee"/><path d="M2 9h26L15 19z" fill="#fff"/><path d="M0 27l30-18v18z" fill="#1687dd"/></svg></i>
      <i><svg width="30" height="30"><circle cx="15" cy="15" r="14.500" fill="#fcc31e"/><path d="M15 15L2.500 8A14.500 14.500 0 0 1 27.500 8z" fill="#ea4335"/><path d="M2.500 8A14.500 14.500 0 0 0 14 29.500L21 18 15 15z" fill="#2da44e"/><path d="M2.500 8L9 18l6-11h12.500A14.500 14.500 0 0 0 2.500 8z" fill="#ea4335"/><circle cx="15" cy="15" r="7" fill="#fff"/><circle cx="15" cy="15" r="5.500" fill="#2d7bee"/></svg></i>
      <i><svg width="30" height="30"><rect width="30" height="30" rx="6" fill="#050505"/><g fill="none" stroke-width="2"><path d="M19 26.500H15C0 26.500 0 3.500 15 3.500c8 0 11.500 5 11.500 12V28" stroke="#d4e81c"/><path d="M19 23.500h-4c-11 0-11-17 0-17 6 0 8.500 4 8.500 9V26" stroke="#19b648"/><path d="M18 20.500h-3c-7 0-7-11 0-11 4 0 5.500 2.500 5.500 6v10" stroke="#18b4e0"/><path d="M17 17.500h-2c-3.500 0-3.500-5 0-5 2 0 2.500 1 2.500 3v9" stroke="#f021c5"/></g></svg></i>
      <i><svg width="30" height="30"><circle cx="15" cy="15" r="14.500" fill="#fff"/><circle cx="15" cy="15" r="13" fill="#20272b"/><path d="M8 7l4 2q3-1 6 0l4-2v5c3 6-1 9-5 9v8h-7v-5l-4-2 4 1v-2C5 20 5 16 8 12z" fill="#fff"/><path d="M30 17v12l-4 1-10-8 2-1 8 6v-7l-8 6-2-1 10-9z" fill="#219ce0"/></svg></i>
      <i class="active"><svg width="28" height="28"><use href="#chip"/></svg></i>
    </div>
    <div class="tray">
      <svg class="weather" width="30" height="30" viewBox="0 0 30 30"><path d="M12 0c8 6 5 17-4 17-4 0-7-2-8-4 8 1 13-5 12-13z" fill="#f6a21f"/><path d="M5 29a6 6 0 0 1 0-11c1-9 14-11 17-3 10-1 10 13 2 14z" fill="#b9d3fa"/><path d="M5 29a6 6 0 0 1 0-9q6 3 12-2 7 6 12 4 0 6-5 7z" fill="#dfeaff"/></svg>
      <span class="temp">13°C</span><span class="cond" dir="rtl">غائم غالبًا</span>
      <svg class="sys" width="110" height="22" viewBox="0 0 110 22"><g fill="none" stroke="#fff" stroke-width="1.300"><path d="M1 14l8-8 8 8M35 7h13v10H34v-5M49 10h1.500v4H49M30 4v4M34 4v4M29 7h6v3h-6zM32 10v7h3M88 8h4l5-5v16l-5-5h-4zM100 7q3 4 0 8M103 4q5 7 0 14M107 3q5 8 0 16"/><path d="M61 18Q61 4 76 3M65 18Q65 8 77 7M69 18Q70 12 77 11" stroke="#bbb"/></g><circle cx="75" cy="17" r="1.800" fill="#fff"/></svg>
      <span class="lang">ع</span>
      <div class="clock"><span>4:47 AM</span><span>12/12/2022</span></div>
      <svg class="note" width="32" height="32" viewBox="0 0 32 32"><path d="M0 2h20v17H10l-4 4v-4H0z" fill="#fff"/><path d="M4 6.500h12M4 10.500h12M4 14.500h8" stroke="#223" stroke-width="1.300"/><circle cx="20" cy="22" r="10" fill="#333c4c" stroke="#999"/><text class="badge" x="15.500" y="28">4</text></svg>
    </div>
  </div>

  <div class="dialog">
    <div class="dtitle"><span>Multimeter-XMM2</span><svg width="13" height="13"><path d="M.5.500l12 12M12.500.5l-12 12" stroke="#000" stroke-width="1.200"/></svg></div>
    <div class="display"><div>5.329 uA</div></div>
    <div class="g1"><b class="sel">A</b><b>V</b><b>Ω</b><b>dB</b></div>
    <div class="g2"><b><svg width="22" height="8"><path d="M0 6.500L4.500 1.500h3l6 5h3L21.500 1.500" fill="none" stroke="#000" stroke-width="1.500"/></svg></b><b class="sel"><svg width="22" height="2"><path d="M0 1h22" stroke="#000" stroke-width="2"/></svg></b></div>
    <div class="g3"><div class="jack"><span>+</span><svg width="16" height="16"><circle cx="8" cy="8" r="7.300" fill="#fff" stroke="#bbb"/><circle cx="8" cy="8" r="5" fill="#c8c8c8"/></svg></div><b>Set...</b><div class="jack neg"><span>−</span><svg width="16" height="16"><circle cx="8" cy="8" r="7.300" fill="#fff" stroke="#bbb"/><circle cx="8" cy="8" r="5" fill="#c8c8c8"/></svg></div></div>
    <svg class="grip" width="10" height="10"><path d="M8 0h2v2H8zM4 4h2v2H4zM8 4h2v2H8zM0 8h2v2H0zM4 8h2v2H4zM8 8h2v2H8z" fill="#b0b0b0"/></svg>
  </div>
</div>
</body>
</html>
```
FILE: styles.css
```css
* { box-sizing: border-box; }
body { margin: 0; width: 1920px; height: 1080px; overflow: hidden; background: #f0f0f0; color: #000; font: 14.5px/18px "Open Sans", "Noto Sans", sans-serif; letter-spacing: -0.2px; }
svg { display: block; flex: none; }
i, em, b { font-style: normal; font-weight: 400; }
s { text-decoration: none; }
.sprite { position: absolute; width: 0; height: 0; }
.app { position: relative; width: 1920px; height: 1080px; display: flex; flex-direction: column; }

.titlebar { height: 30px; background: #fff; border-bottom: 1px solid #999; display: flex; align-items: center; padding: 0 25px 0 3px; color: #8e8e8e; }
.titlebar .logo { width: 18px; height: 18px; }
.title { margin-left: 6px; letter-spacing: -0.08px; }
.wincontrols { margin-left: auto; }

.menubar { height: 30px; border-top: 1px solid #fff; border-bottom: 1px solid #a0a0a0; border-right: 1px solid #a0a0a0; display: flex; align-items: center; padding-left: 4px; }
.sheeticon { width: 20px; height: 20px; }
.menus { display: grid; grid-template-columns: 36px 39px 45px 48px 45px 71px 66px 49px 64px 65px 68px 60px; margin-left: 8px; }
.menus u { text-underline-offset: 2px; text-decoration-thickness: 1px; }
.mdibtns { display: flex; gap: 1px; margin: 3px 2px 0 auto; }
.mdibtns b { width: 20px; height: 20px; border: 1px solid; border-color: #fff #696969 #696969 #fff; box-shadow: inset -1px -1px #a0a0a0; display: grid; place-items: center; }
.mdibtns svg { width: 16px; height: 16px; }

.row { display: flex; height: 31px; }
.bar { height: 31px; border: 1px solid; border-color: #fff #a0a0a0 #a0a0a0 #fff; display: flex; align-items: center; color: #a0a0a0; padding-bottom: 1px; }
.t { width: 22px; height: 24px; display: grid; place-items: center; flex: none; }
.t svg { width: 16px; height: 16px; shape-rendering: crispEdges; }
.t.k { color: #000; }
.t.v { color: #111; }
.k.blue { --f: #2f86f0; color: #003c9c; }
.on { border: 1px solid; border-color: #a0a0a0 #fff #fff #a0a0a0; background: #f8f8f8; }
.bar s { width: 8px; height: 24px; flex: none; background: linear-gradient(90deg, transparent 3px, #a0a0a0 3px 4px, #fff 4px 5px, transparent 5px); }
.bar em { width: 8px; height: 0; border: 4px solid transparent; border-top-color: #000; border-bottom: 0; flex: none; margin: 0 2px; }
.b1 { width: 280px; border-left: 0; padding-left: 11px; }
.b2 { width: 528px; margin-left: 250px; padding-left: 10px; }
.b3 { width: 86px; margin-left: auto; padding: 0 0 4px 12px; }
.combo { width: 134px; height: 25px; margin-left: 1px; border: 1px solid #adadad; background: #e1e1e1; color: #000; display: flex; align-items: center; justify-content: space-between; padding: 0 5px 0 3px; flex: none; font-size: 14.5px; letter-spacing: -0.2px; white-space: nowrap; }
.c1 { width: 470px; border-left: 0; padding-left: 11px; }
.c2 { width: 354px; margin-left: 8px; padding-left: 10px; }
.c3 { width: 57px; border-left: 0; padding-left: 11px; }
.c4 { width: 235px; padding-left: 11px; }
.c5 { width: 124px; margin-left: auto; padding-left: 10px; }
.d1 { width: 168px; border-left: 0; padding-left: 11px; }

.main { height: 672px; display: flex; }
.toolbox { width: 198px; border-top: 1px solid #a0a0a0; border-right: 1px solid #696969; padding: 3px 11px 0 3px; display: flex; flex-direction: column; }
.tbhead { display: flex; height: 25px; gap: 3px; align-items: center; }
.tbhead h2 { margin: 0; width: 151px; height: 25px; font: inherit; line-height: 22px; padding-left: 3px; background: linear-gradient(90deg, #bccbdb, #d6e4f2); letter-spacing: 0; }
.tbhead .mini { margin-bottom: 2px; }
.mini { width: 14px; height: 14px; flex: none; border: 1px solid; border-color: #fff #696969 #696969 #fff; box-shadow: inset -1px -1px #a0a0a0; display: grid; place-items: center; }
.tbbody { margin-top: 3px; height: 608px; border: 1px solid; border-color: #ddd #696969 #696969 #ddd; box-shadow: inset -1px -1px #a0a0a0; padding: 3px 2px 2px 1px; }
.tbicons { height: 23px; display: flex; padding: 3px 0 0 4px; gap: 10px; }
.tbicons svg { width: 16px; height: 16px; shape-rendering: crispEdges; }
.tbicons .navy { color: #000080; }
.tbicons .last { margin-left: 25px; }
.tree { height: 578px; border: 1px solid #828790; background: #fff; padding: 2px 0 0 7px; }
.node { display: flex; height: 18px; align-items: center; gap: 4px; }
.node.sub { padding-left: 27px; gap: 0; }
.node .sh { width: 16px; height: 16px; }
.sel { background: #f0f0f0; margin-left: 3px; padding: 0 2px; }
.tabs { display: flex; font-size: 13.3px; letter-spacing: -0.45px; align-items: flex-start; white-space: nowrap; }
.tabs span { height: 21px; border: 1px solid #696969; border-top: 0; border-radius: 0 0 3px 3px; box-shadow: inset -1px -1px #a0a0a0; line-height: 21px; padding-left: 4px; overflow: hidden; }
.tabs .cur { height: 24px; border-left-color: #fff; line-height: 27px; padding-left: 5px; }
.ltabs { padding-left: 2px; width: 186px; }
.ltabs span:nth-child(1) { width: 67px; }
.ltabs span:nth-child(2) { width: 56px; margin-right: 3px; border-left: 1px solid #fff; }
.ltabs .cutoff { width: 17px; padding-left: 3px; border-right: 0; border-radius: 0; box-shadow: none; }
.ltabs b { width: 19px; height: 19px; margin-top: 4px; border: 1px solid #b0b0b0; display: grid; place-items: center; flex: none; }

.center { width: 1696px; border-top: 1px solid #696969; border-right: 1px solid #696969; display: flex; flex-direction: column; padding-left: 4px; }
.frame { margin-top: 3px; width: 1687px; height: 631px; border: 2px solid; border-color: #6e6e6e #fff #fff #777; flex: none; }
.vp { display: flex; height: 607px; }
.vscroll { width: 19px; height: 606px; display: flex; flex-direction: column; justify-content: space-between; }
.vscroll .thumb { height: 304px; margin-bottom: 193px; margin-top: -1px; background: #cdcdcd; }
.vscroll svg:first-child { margin-bottom: 67px; }
.hscroll { display: flex; height: 19px; width: 1663px; }
.hscroll .thumb { width: 1471px; height: 19px; background: #cdcdcd; margin-right: 150px; }
.doctabs { border-top: 1px solid #696969; margin-left: -4px; padding-left: 4px; margin-top: 5px; height: 32px; display: flex; justify-content: space-between; }
.doctab { width: 96px; height: 27px; border: 1px solid #000; border-top-color: #f0f0f0; border-left-color: #fff; border-radius: 0 0 3px 3px; margin-top: -1px; display: flex; align-items: center; padding: 2px 0 0 2px; gap: 4px; white-space: nowrap; }
.docnav { display: flex; margin: 7px 2px 0 0; height: 15px; }
.docnav b { width: 15px; height: 15px; border: 1px solid; border-color: #fff #696969 #696969 #fff; display: grid; place-items: center; }

.instruments { width: 26px; height: 668px; border-bottom: 1px solid #a0a0a0; }
.ibar { height: 538px; border: 1px solid #a0a0a0; border-left: 0; display: flex; flex-direction: column; align-items: center; padding: 12px 1px 0 0; color: #a0a0a0; }
.ibar i { height: 21px; display: grid; place-items: center; flex: none; }
.ibar svg { width: 16px; height: 16px; shape-rendering: crispEdges; }
.ibar hr { width: 21px; height: 2px; margin: 2px 0; border: 0; border-top: 1px solid #a0a0a0; border-bottom: 1px solid #fff; flex: none; }
.ibar .h2 { margin: 7px 0 4px; }
.probe { margin-top: 2px; }
.probe svg { width: 18px; height: 18px; shape-rendering: auto; }
.probe text { font: bold 7px "DejaVu Sans", sans-serif; fill: #000; letter-spacing: 0; }
.r { border: 3px solid transparent; border-left: 4px solid #a0a0a0; border-right: 0; margin-top: 3px; height: 0; }
.r.dark { border-left-color: #000; margin: 5px 0 4px; }
.sunk { width: 22px; height: 32px; border: 1px solid; border-color: #888 #fff #fff #888; background: #f7f7f7; display: flex; flex-direction: column; align-items: center; padding-top: 2px; flex: none; }

.spread { height: 181px; border-top: 1px solid #696969; display: flex; padding-top: 2px; }
.spside { width: 30px; padding-left: 2px; }
.spside .mini { margin: 0 0 3px 5px; height: 13px; }
.vtitle { margin-top: 5px; width: 25px; height: 140px; background: linear-gradient(#d6e4f2, #bccbdb); display: flex; align-items: flex-end; }
.vtitle span { writing-mode: vertical-rl; transform: rotate(180deg); font: 14px/18px "DejaVu Sans", sans-serif; letter-spacing: -0.4px; padding-top: 4px; white-space: nowrap; }
.spmain { width: 1885px; padding: 5px 1px 0 2px; }
.results { height: 143px; width: 1879px; border: 1px solid #828790; outline: 1px solid #e0e0e0; box-shadow: 3px 2px #696969; background: #fff; padding: 5px 0 0 23px; }
.results pre { margin: 0; font: 14px/18px "Open Sans", sans-serif; letter-spacing: 0; word-spacing: 0.3px; }
.btabs { margin-top: 1px; }
.btabs span { height: 22px; margin-right: 2px; }
.btabs .cur { height: 24px; margin-right: 0; width: 54px; }
.btabs span:nth-child(2) { width: 46px; }
.btabs span:nth-child(3) { width: 81px; }
.btabs span:nth-child(4) { width: 89px; }
.btabs span:nth-child(5) { width: 71px; }

.status { height: 24px; border-top: 1px solid #a0a0a0; box-shadow: inset 0 2px #fff; display: grid; grid-template-columns: 1489px 183px 183px 65px; align-items: center; padding-top: 2px; letter-spacing: -0.15px; }
.status span { height: 19px; line-height: 20px; border-right: 1px solid #d0d0d0; padding-left: 5px; font-size: 14.3px; }
.leds { display: flex; gap: 2px; padding-left: 5px; }
.leds i { width: 6px; height: 12px; background: #0f0; border: 1px solid #4a984a; border-width: 1px 0 0 2px; }
.leds .off { background: #f0f0f0; border-color: #aaa; }

.taskbar { height: 50px; display: flex; background: linear-gradient(90deg, #22373e, #20333f 60%, #1a2742 85%, #1b2744); color: #fff; }
.start { width: 60px; display: grid; place-items: center; }
.search { width: 430px; border: 3px solid #b3b3b3; background: #fff; color: #333; display: flex; align-items: center; padding-left: 12px; gap: 14px; font-size: 18.5px; letter-spacing: -0.2px; }
.apps { display: grid; grid-template-columns: repeat(11, 62px); margin-left: -1px; }
.apps i { display: grid; place-items: center; }
.run { background: linear-gradient(#76b9ed, #76b9ed) center bottom / 51px 3px no-repeat; }
.active { background: #4c5c69; border-bottom: 3px solid #76b9ed; }
.wa { margin: 4px -10px 0 0; }
.badge { font: 15px "Open Sans", sans-serif; fill: #fff; }
.tray { margin-left: auto; width: 496px; display: flex; align-items: center; }
.temp { margin-left: 11px; width: 47px; font-size: 17px; letter-spacing: 0; }
.cond { width: 68px; font: 17px "DejaVu Sans", sans-serif; letter-spacing: 0; white-space: nowrap; }
.sys { margin-left: 30px; }
.lang { margin-left: 22px; font: 17px "DejaVu Sans", sans-serif; width: 12px; }
.clock { width: 90px; margin-left: 13px; display: flex; flex-direction: column; gap: 5px; text-align: center; font-size: 14.5px; letter-spacing: -0.2px; }
.note { margin-left: 12px; margin-top: 4px; }

.schematic text { letter-spacing: 0; }
.zone { font: 15px "Liberation Sans", Arial, sans-serif; fill: #8a8a8a; }
.lbl { font: bold 16px "Liberation Sans", Arial, sans-serif; }
.bluetext { fill: #00f; }
.mono { font: bold 15px "Liberation Mono", monospace; }

.dialog { position: absolute; left: 855px; top: 408px; width: 210px; height: 207px; border: 1px solid #777; background: #f0f0f0; box-shadow: 0 5px 18px rgba(0, 0, 0, .35); display: flex; flex-direction: column; align-items: center; }
.dtitle { width: 208px; height: 37px; background: #fff; display: flex; justify-content: space-between; align-items: center; padding: 0 15px 0 9px; flex: none; }
.display { width: 208px; height: 40px; border: 2px solid #fff; border-right-color: #777; border-bottom-color: #777; padding: 0 1px 1px 0; flex: none; }
.display div { height: 35px; background: #000; border: 2px solid #fff; outline: 1px solid #aaa; outline-offset: -1px; color: #fff; text-align: center; font: 16px/24px "Liberation Sans", Arial, sans-serif; letter-spacing: -0.2px; }
.dialog b { background: #e1e1e1; border: 1px solid #adadad; display: grid; place-items: center; font-size: 13px; margin: 0; }
.dialog b.sel { background: #cce4f7; border-color: #005499; padding: 0; }
.g1 { margin-top: 10px; width: 194px; height: 35px; border: 1px solid #dcdcdc; display: flex; gap: 11px; padding: 4px 0 0 14px; flex: none; }
.g1 b { width: 33px; height: 24px; }
.g2 { width: 133px; height: 30px; margin-left: -2px; border: 1px solid #dcdcdc; border-top: 0; display: flex; gap: 14px; padding: 6px 0 0 11px; flex: none; }
.g2 b { width: 49px; height: 18px; }
.g2 b.sel { width: 47px; }
.g3 { width: 208px; display: flex; justify-content: space-between; padding: 13px 9px 0 8px; }
.g3 > b { width: 82px; height: 22px; margin: 1px 0 0; }
.jack { width: 16px; display: flex; flex-direction: column; align-items: center; line-height: 12px; font-size: 13px; }
.jack span { height: 12px; margin-top: -2px; margin-bottom: 3px; }
.jack.neg { margin-top: 3px; }
.jack.neg span { margin: -3px -6px 4px 0; }
.grip { position: absolute; right: 2px; bottom: 2px; }
```
